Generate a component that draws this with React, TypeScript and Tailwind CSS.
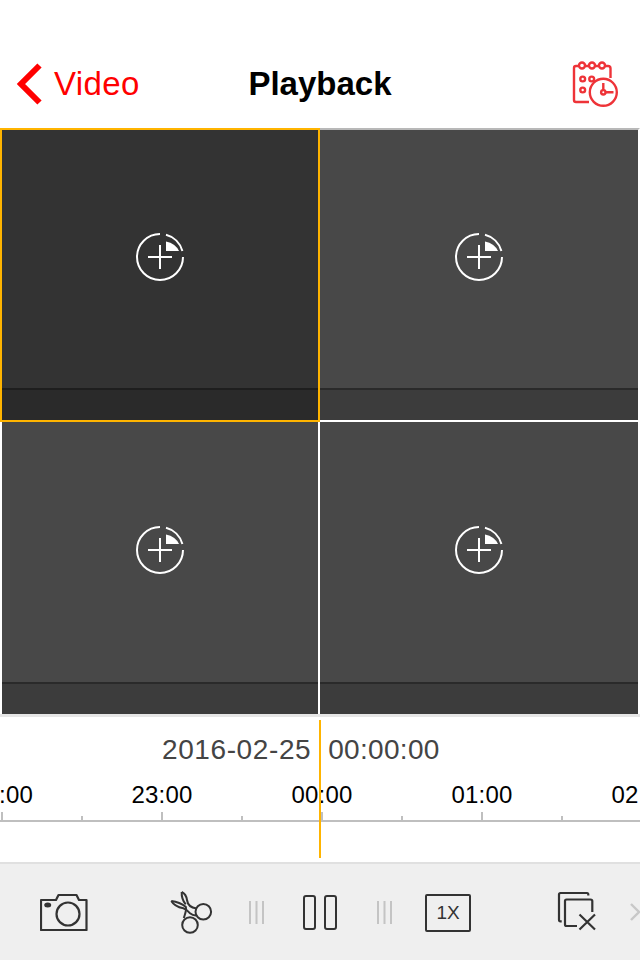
const font = { fontFamily: '"Liberation Sans", Arial, sans-serif' };

function AddIcon() {
  return (
    <svg viewBox="0 0 48 48" className="w-12 h-12" fill="none" stroke="#fff">
      <path d="M24 1A23 23 0 1 0 47 24" strokeWidth="2" />
      <path d="M30 1.800A23 23 0 0 1 46.400 18" strokeWidth="2" />
      <path d="M30 8.500Q39.500 10.500 43 18H30Z" fill="#fff" stroke="none" />
      <path d="M12 24H36M24 12V36" strokeWidth="2" />
    </svg>
  );
}

function Cell({ className, strip, line }: { className: string; strip: string; line: string }) {
  return (
    <div className={`flex flex-col ${className}`}>
      <div className="flex-1 flex items-center justify-center pb-1">
        <AddIcon />
      </div>
      <div className={`h-[32px] border-t-2 ${strip} ${line}`} />
    </div>
  );
}

function CalendarIcon() {
  return (
    <svg viewBox="572 61 47 47" className="w-[47px] h-[47px]" fill="none" stroke="#ee3338" strokeWidth="2.400">
      <path d="M589 102H576Q574 102 574 100V68Q574 66 576 66H579M585 66H589M595 66H599M605 66H608Q610.500 66 610.500 68.500V78" />
      <circle cx="582" cy="65.500" r="3" />
      <circle cx="592" cy="65.500" r="3" />
      <circle cx="602" cy="65.500" r="3" />
      <circle cx="582.700" cy="79" r="2.400" />
      <circle cx="591.700" cy="79" r="2.400" />
      <circle cx="582.700" cy="90" r="2.400" />
      <circle cx="603.300" cy="92.300" r="13.500" />
      <circle cx="603.300" cy="92.300" r="2.200" />
      <path d="M603.300 90V83M605.500 92.300H613.500" />
    </svg>
  );
}

function CameraIcon() {
  return (
    <svg viewBox="40 893 48 38" className="w-12 h-[38px]" fill="none" stroke="#333" strokeWidth="2.200">
      <path d="M41 900H56L58.500 895H76.500L79 900H86.500V930H41Z" strokeLinejoin="round" />
      <circle cx="68" cy="914" r="11.500" />
      <ellipse cx="47.700" cy="905" rx="3.500" ry="2.500" fill="#333" stroke="none" />
    </svg>
  );
}

function ScissorsIcon() {
  return (
    <svg viewBox="170 891 43 43" className="w-[43px] h-[43px]" fill="none" stroke="#333" strokeWidth="2">
      <circle cx="203.300" cy="911.700" r="7.800" />
      <circle cx="190" cy="925" r="7.800" />
      <path d="M181.700 892C185 893.500 186.500 896.500 187 900C187.500 904 190 907.500 196.500 908.500" />
      <path d="M181.700 892C181.500 896 182.500 900.500 185.700 904.300" />
      <path d="M171.300 901C175 901.500 180 902.300 185.700 906.700C187 910 185 914 183.800 918" />
      <path d="M171.300 901C174 905.500 179 907.500 183.300 908.300C187 909.500 188.500 912 190 913.300C192 915 194 915.700 196.500 915.500" />
    </svg>
  );
}

function GripIcon() {
  return (
    <svg viewBox="0 0 15 23" className="w-[15px] h-[23px]" stroke="#c4c4c4" strokeWidth="2">
      <path d="M1 0V23M7.500 0V23M14 0V23" />
    </svg>
  );
}

function StopIcon() {
  return (
    <svg viewBox="556 892 42 42" className="w-[42px] h-[42px]" fill="none" stroke="#333" strokeWidth="2.200">
      <path d="M561.700 922.300H560.500Q559 922.300 559 921V895.500Q559 894 560.500 894H587Q588.300 894 588.300 895.500V896.500" />
      <path d="M577 927H566.500Q565 927 565 925.500V902Q565 900.500 566.500 900.500H590.500Q592.300 900.500 592.300 902V913" />
      <path d="M579.500 915.500L595 930.500M595 915.500L579.500 930.500" />
    </svg>
  );
}

const hours = [':00', '23:00', '00:00', '01:00', '02:00'];

export default function App() {
  return (
    <div className="w-[640px] h-[960px] bg-white overflow-hidden flex flex-col" style={font}>
      {/* Nav bar */}
      <header className="h-[128px] pt-[62px] flex items-start justify-between relative">
        <div className="flex items-center text-[#ff0000]">
          <svg viewBox="0 0 26 42" className="w-[26px] h-[42px] ml-[16px]" fill="none" stroke="#ff0000" strokeWidth="6">
            <path d="M23.500 2.500L5 21L23.500 39.500" />
          </svg>
          <span className="text-[33px] leading-[44px] ml-[12px] tracking-[0.4px]">Video</span>
        </div>
        <h1 className="absolute left-0 right-0 top-[62px] text-center text-[33px] leading-[44px] font-bold text-black">Playback</h1>
        <div className="mr-[21px] -mt-[1px]">
          <CalendarIcon />
        </div>
      </header>

      {/* Video grid */}
      <div className="grid grid-cols-2 border-b-[3px] border-[#e6e6e6]">
        <Cell
          className="h-[294px] bg-[#333333] border-2 border-[#ffb400]"
          strip="bg-[#2a2a2a]"
          line="border-[#1e1e1e]"
        />
        <Cell
          className="h-[294px] bg-[#484848] border-t-2 border-t-[#b8b8b8] border-b-2 border-b-white border-r-2 border-r-white"
          strip="bg-[#3c3c3c]"
          line="border-[#2a2a2a]"
        />
        <Cell
          className="h-[292px] bg-[#484848] border-x-2 border-white"
          strip="bg-[#3c3c3c]"
          line="border-[#2a2a2a]"
        />
        <Cell
          className="h-[292px] bg-[#484848] border-r-2 border-white"
          strip="bg-[#3c3c3c]"
          line="border-[#2a2a2a]"
        />
      </div>

      {/* Timeline */}
      <div className="h-[147px] border-b-2 border-[#e0e0e0] relative overflow-hidden">
        <div className="absolute left-[319px] top-[3px] w-[2px] h-[138px] bg-[#ffb400]" />
        <div className="h-[64px] pt-[16px] flex text-[28px] leading-[34px] text-[#444444]">
          <span className="ml-[162px] tracking-[0.6px]">2016-02-25</span>
          <span className="ml-[17px] tracking-[0.3px]">00:00:00</span>
        </div>
        <div className="flex -ml-[78px] text-[24px] leading-[28px] text-black tracking-[0.2px]">
          {hours.map((h) => (
            <span key={h} className={`w-[160px] shrink-0 ${h === ':00' ? 'text-right pr-[49px]' : 'text-center'}`}>
              {h}
            </span>
          ))}
        </div>
        <svg viewBox="0 0 640 12" className="w-[640px] h-3 mt-[1px] block" stroke="#bfbfbf" strokeWidth="2">
          <path d="M0 11H640M2 2V11M162 2V11M322 2V11M482 2V11M82 6V11M242 6V11M402 6V11M562 6V11M642 2V11" />
        </svg>
      </div>

      {/* Toolbar */}
      <div className="flex-1 bg-[#efefef] flex items-center">
        <div className="ml-[40px]"><CameraIcon /></div>
        <div className="ml-[82px]"><ScissorsIcon /></div>
        <div className="ml-[36px]"><GripIcon /></div>
        <div className="ml-[39px] flex gap-[8px]">
          <div className="w-[13px] h-[35px] border-2 border-[#333333] rounded-[3px]" />
          <div className="w-[13px] h-[35px] border-2 border-[#333333] rounded-[3px]" />
        </div>
        <div className="ml-[40px]"><GripIcon /></div>
        <div className="ml-[33px] mt-[2px] w-[46px] h-[38px] border-2 border-[#333333] rounded-[2px] flex items-center justify-center text-[19px] text-[#333333]">1X</div>
        <div className="ml-[85px]"><StopIcon /></div>
        <svg viewBox="0 0 10 18" className="w-[10px] h-[18px] ml-[32px] shrink-0" fill="none" stroke="#c8c8c8" strokeWidth="2.400">
          <path d="M1 1L9 9L1 17" />
        </svg>
      </div>
    </div>
  );
}
